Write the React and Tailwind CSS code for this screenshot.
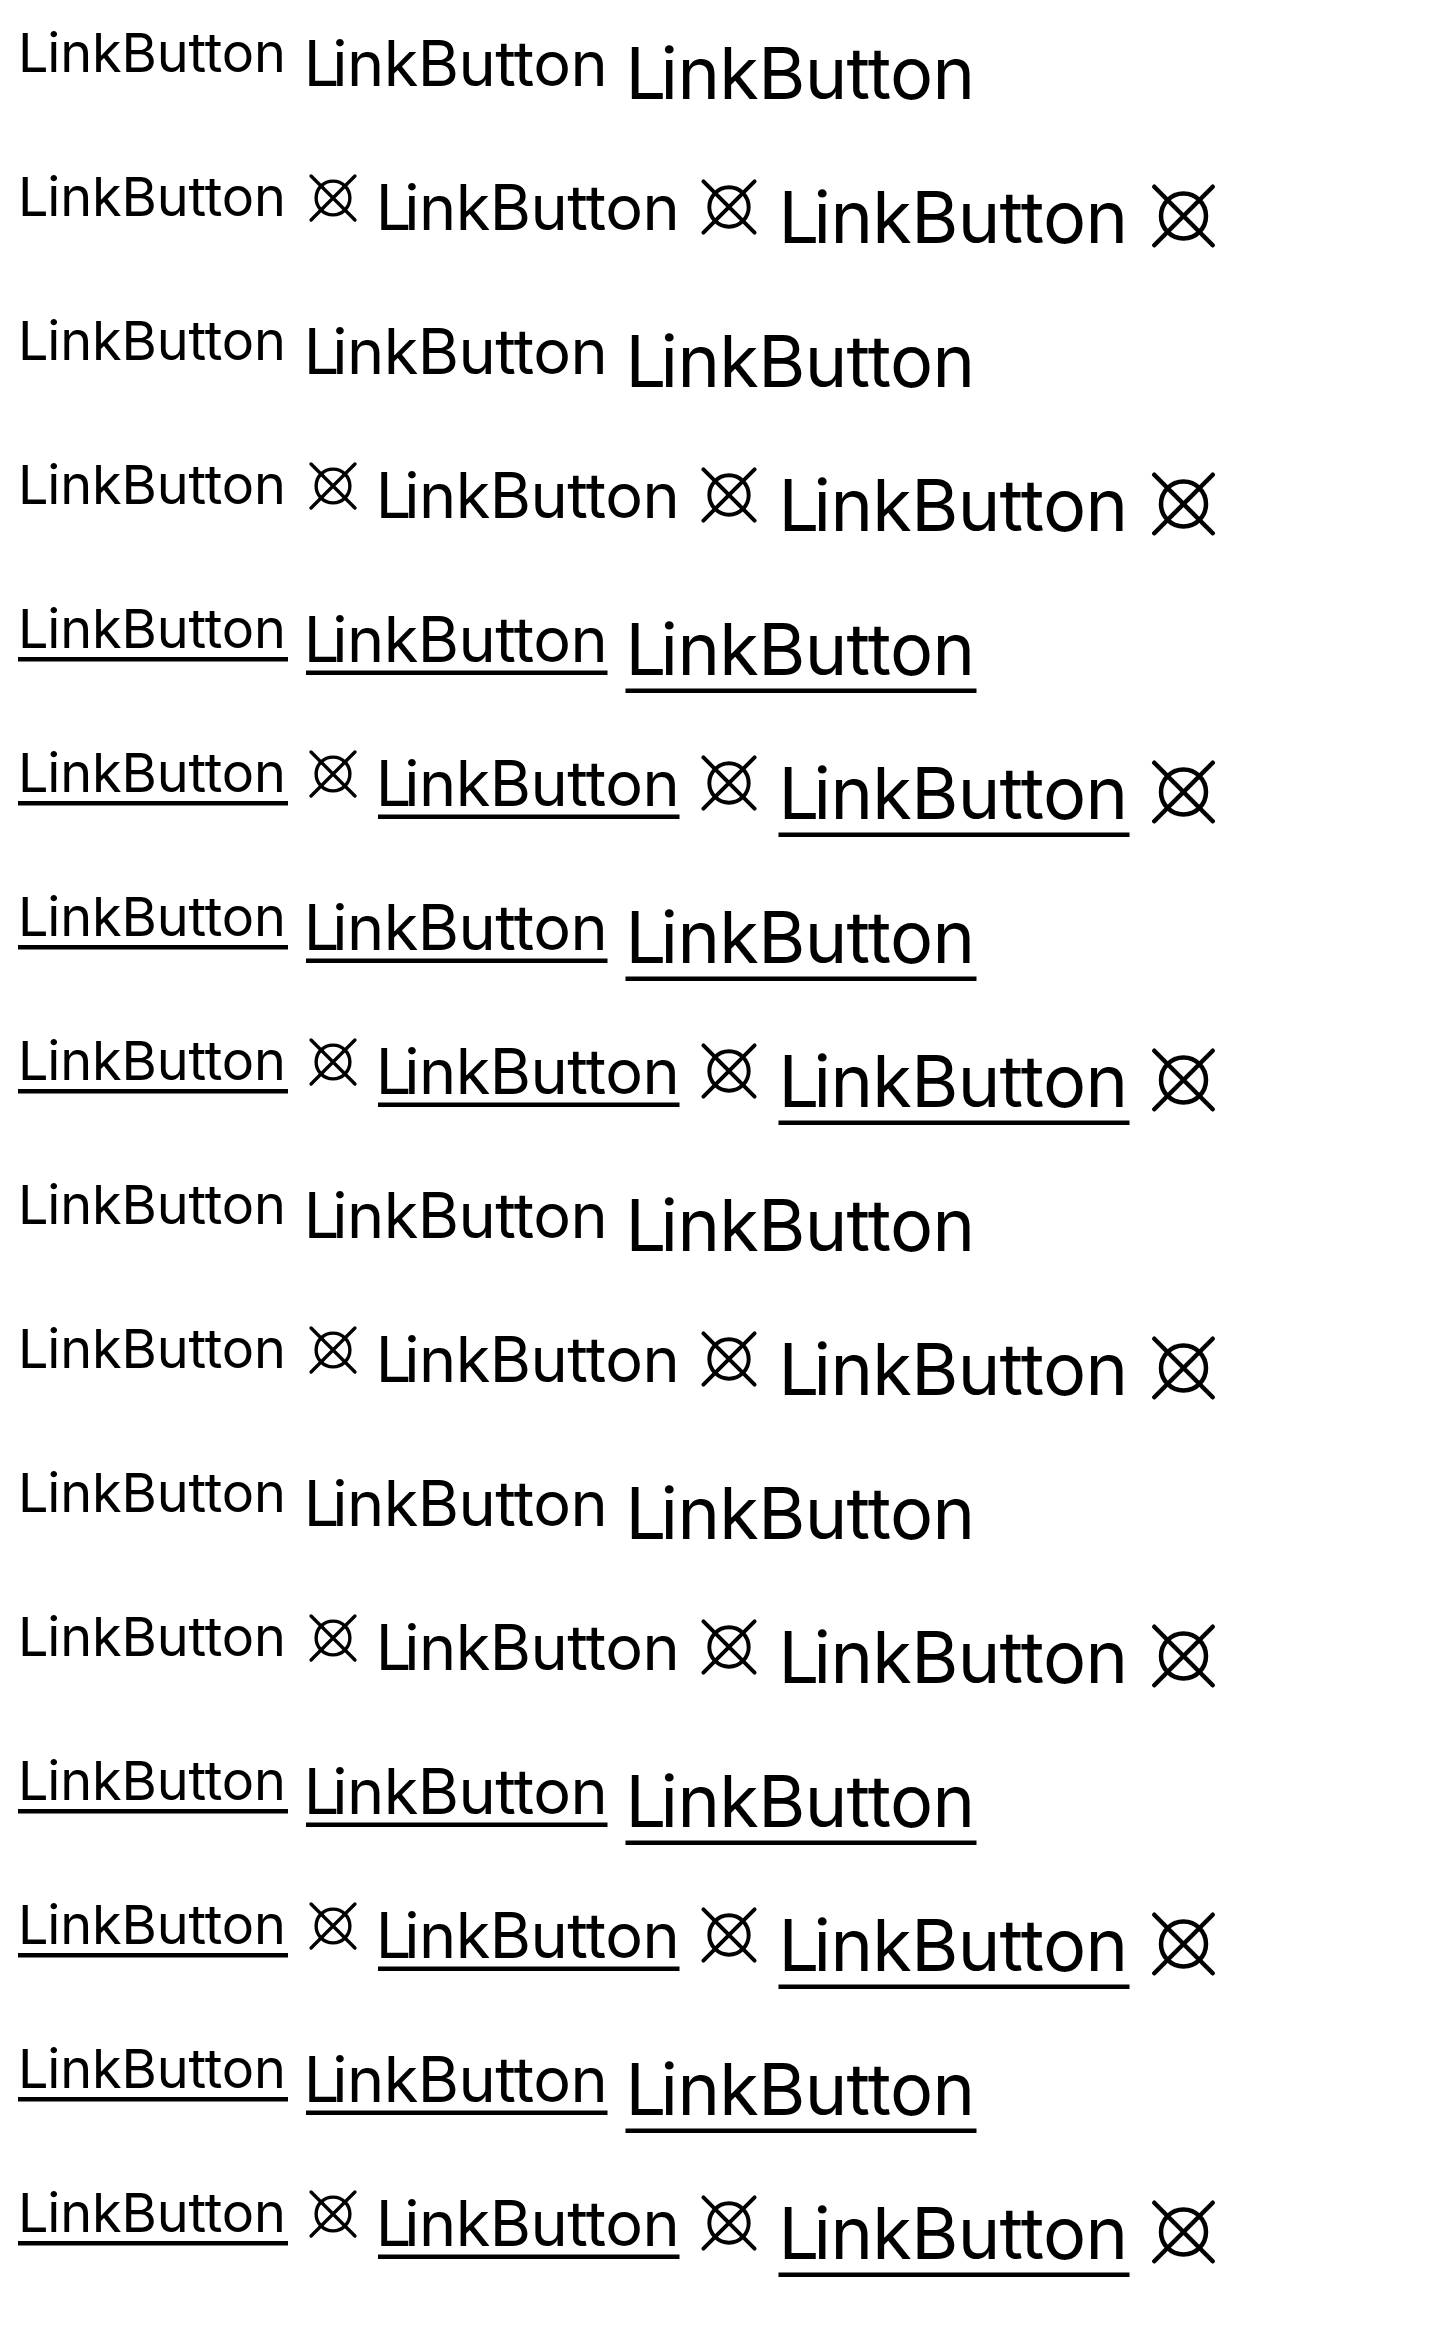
const sizes = [
  {
    text: "text-[12px] leading-4",
    label: "w-[59.5px] tracking-[-0.03px] first-letter:tracking-[-0.28px] after:top-[14px]",
    icon: "size-3",
  },
  {
    text: "text-[14px] leading-5",
    label: "w-[67.5px] tracking-[-0.115px] first-letter:tracking-[-1.6px] after:top-[17px]",
    icon: "size-3.5",
  },
  {
    text: "text-[16px] leading-6",
    label: "w-[77.55px] tracking-[-0.14px] first-letter:tracking-[-1.25px] after:top-[21px]",
    icon: "size-4",
  },
];

const rows = Array.from({ length: 16 }, (_, i) => ({
  icon: i % 2 === 1,
  underline: i % 8 >= 4,
}));

function CrossedCircle({ className }) {
  return (
    <svg viewBox="0 0 16 16" fill="none" stroke="currentColor" strokeLinecap="round" className={`shrink-0 ${className}`}>
      <circle cx="8" cy="8" r="5" />
      <path d="M1.5 1.5l13 13M14.5 1.5l-13 13" />
    </svg>
  );
}

function LinkButton({ size, icon, underline }) {
  return (
    <a className={`inline-flex items-center gap-1 ${size.text}`}>
      <span
        className={`relative whitespace-nowrap after:absolute after:inset-x-0 after:h-px after:bg-current ${size.label} ${underline ? "after:block" : "after:hidden"}`}
      >
        LinkButton
      </span>
      {icon && <CrossedCircle className={size.icon} />}
    </a>
  );
}

export default function App() {
  return (
    <div className="h-[2340px] w-[1440px] overflow-hidden bg-white">
      <div className="flex h-[520px] w-[320px] origin-top-left scale-[4.5] flex-col gap-2 p-1 font-['Inter',sans-serif] text-black">
        {rows.map((row, i) => (
          <div key={i} className="flex h-6 items-start gap-1">
            {sizes.map((size) => (
              <LinkButton key={size.icon} size={size} {...row} />
            ))}
          </div>
        ))}
      </div>
    </div>
  );
}
